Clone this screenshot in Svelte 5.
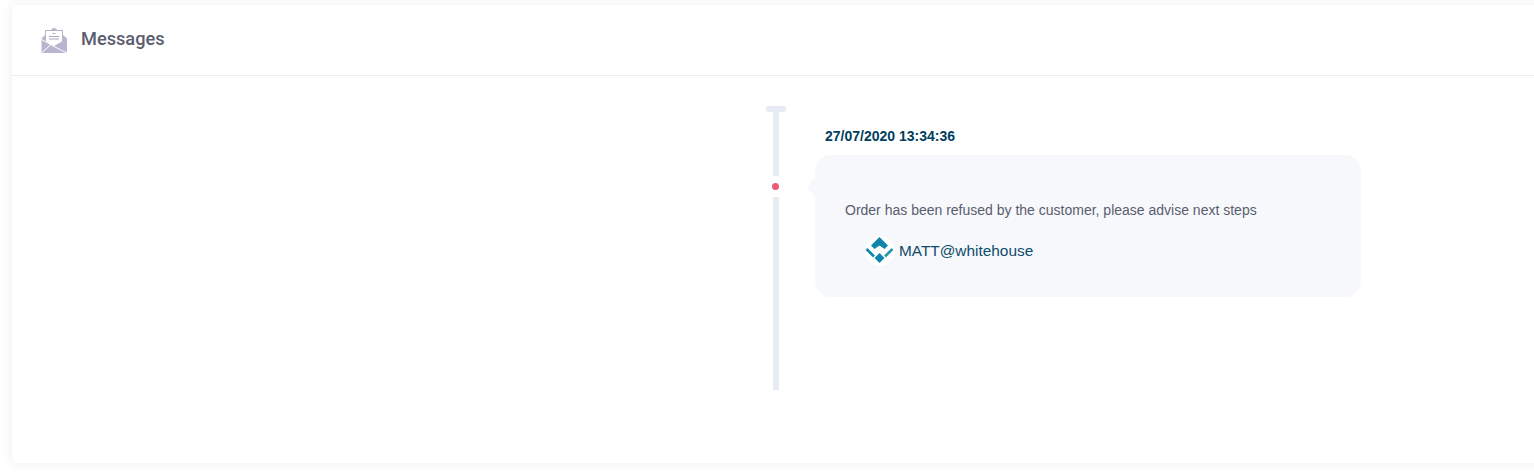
<script>
  const messages = [
    {
      date: '27/07/2020 13:34:36',
      text: 'Order has been refused by the customer, please advise next steps',
      author: 'MATT@whitehouse'
    }
  ];
</script>

<div class="page">
  <section class="card">
    <header class="head">
      <svg class="head-icon" width="28" height="28" viewBox="0 0 28 28" aria-hidden="true">
        <path d="M14 1.5 L17.5 4 L23 4 L23 9 L27 12.5 L27 27 L1.5 27 L1.5 12.5 L5 9 L5 4 L10.5 4 Z" fill="#b9b5cf" />
        <path d="M6 5 H22 V15.5 L14 20 L6 15.5 Z" fill="#fff" />
        <path d="M12.5 7.5 H15.5 M9 10.5 H19 M9 13 H19" stroke="#a9a5c2" stroke-width="1" fill="none" />
        <path d="M1.5 13.5 L14 20.5 L27 27 M1.5 27 L11 18.5" stroke="#fff" stroke-width="1" fill="none" />
      </svg>
      <h2>Messages</h2>
    </header>

    <div class="body">
      <div class="timeline">
        <span class="cap"></span>
        <span class="dot"></span>
      </div>

      <div class="list">
        {#each messages as m}
          <div class="item">
            <div class="date">{m.date}</div>
            <div class="bubble">
              <p>{m.text}</p>
              <div class="author">
                <svg class="logo" width="30" height="30" viewBox="0 0 30 30" aria-hidden="true">
                  <path d="M14.5 1 L23 9.5 L19.5 13 L14.5 9.5 L9.5 13 L6 9.5 Z" fill="#0f84ac" />
                  <path d="M14.5 17 L19.5 22 L14.5 27 L9.5 22 Z" fill="#0f84ac" />
                  <path d="M1.5 13 L9 20.5" stroke="#0f84ac" stroke-width="2.6" fill="none" />
                  <path d="M27.5 13 L20 20.5" stroke="#2a98a8" stroke-width="2.6" fill="none" />
                </svg>
                <span>{m.author}</span>
              </div>
            </div>
          </div>
        {/each}
      </div>
    </div>
  </section>
</div>

<style>
  :global(body) { background: #fff; overflow: hidden; }

  .page { height: 472px; padding: 5px 0 9px 12px; box-sizing: border-box; overflow: hidden; }

  .card {
    width: 1540px;
    height: 458px;
    background: #fff;
    border-radius: 4px;
    box-shadow: 0 0 13px rgba(0, 0, 0, .07);
  }

  .head {
    height: 71px;
    box-sizing: border-box;
    border-bottom: 1px solid #ebedf2;
    display: flex;
    align-items: center;
    padding-left: 28px;
    padding-bottom: 3px;
  }
  .head-icon { margin-right: 13px; margin-top: 2px; }
  h2 {
    margin: 0;
    font: 500 18.2px Roboto, sans-serif;
    color: #595d6e;
  }

  .body { display: flex; padding: 30px 0 0 754px; }

  .timeline {
    position: relative;
    width: 20px;
    height: 284px;
    flex: none;
  }
  .timeline::before {
    content: '';
    position: absolute;
    left: 7px;
    top: 0;
    bottom: 0;
    width: 6px;
    background: #e7ebf4;
  }
  .cap {
    position: absolute;
    left: 0;
    top: 0;
    width: 20px;
    height: 6px;
    border-radius: 3px;
    background: #e7ebf4;
  }
  .dot {
    position: absolute;
    left: 6px;
    top: 77px;
    width: 7px;
    height: 7px;
    border-radius: 50%;
    background: #ed5b75;
    box-shadow: 0 0 0 7px #fff;
    clip-path: inset(-7px 0 -7px 0);
  }

  .list { margin-left: 29px; width: 546px; }

  .date {
    margin: 22px 0 0 10px;
    font: 700 14px/17px "Liberation Sans", Arial, sans-serif;
    color: #003e5c;
  }

  .bubble {
    position: relative;
    margin-top: 10px;
    height: 142px;
    box-sizing: border-box;
    padding: 47px 30px 0;
    background: #f7f8fc;
    border-radius: 16px;
  }
  .bubble::before {
    content: '';
    position: absolute;
    left: -6px;
    top: 25px;
    width: 15px;
    height: 15px;
    background: #f7f8fc;
    border-radius: 3px;
    transform: rotate(45deg);
  }
  .bubble p {
    margin: 0;
    font: 400 14px/17px "Liberation Sans", Arial, sans-serif;
    color: #595d6e;
  }

  .author {
    display: flex;
    align-items: center;
    margin: 17px 0 0 20px;
    font: 400 15.4px/20px "Liberation Sans", Arial, sans-serif;
    color: #0e4c6a;
  }
  .logo {
    margin-right: 4px;
    background: #fff;
    border-radius: 50%;
    flex: none;
  }
</style>
